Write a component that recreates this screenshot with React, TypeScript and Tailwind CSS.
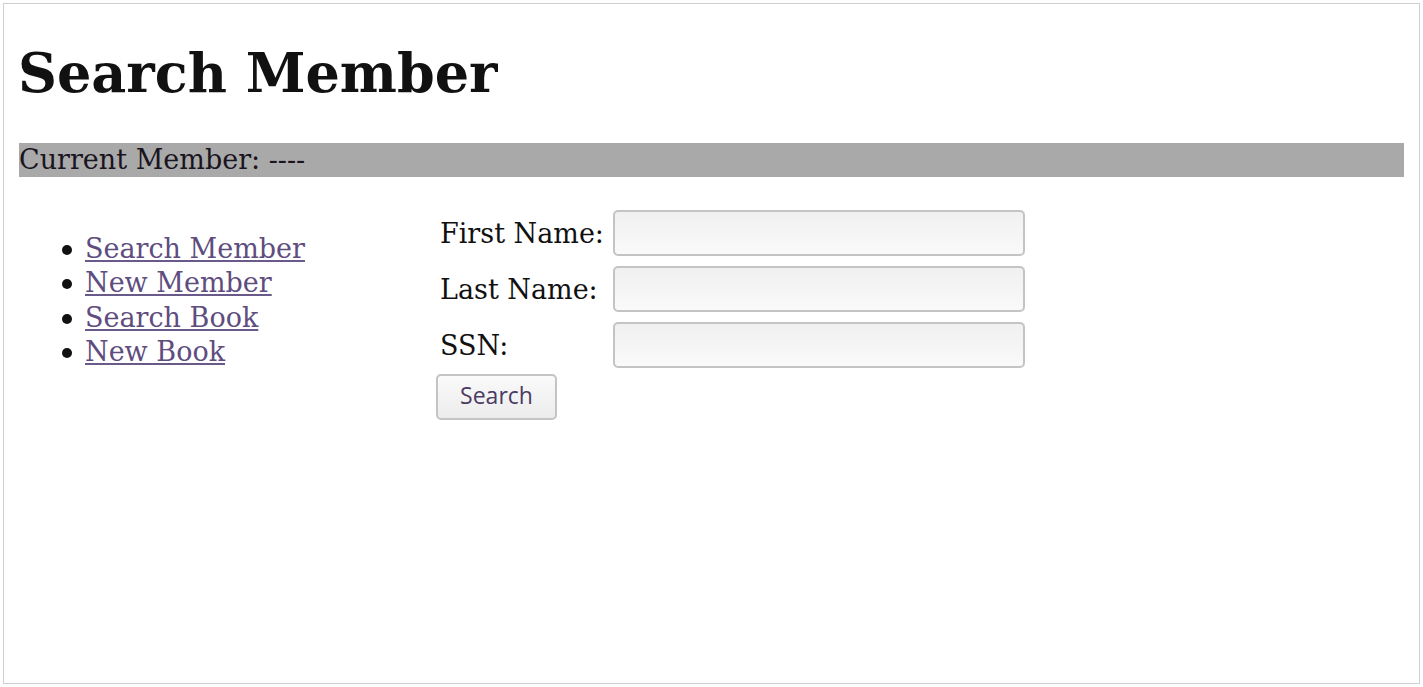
import React from "react";

const serif = { fontFamily: '"DejaVu Serif", serif' };

export default function App() {
  const links = ["Search Member", "New Member", "Search Book", "New Book"];
  return (
    <div className="w-[1423px] h-[687px] bg-white pt-[3px] pl-[3px]" style={serif}>
      <div className="w-[1417px] h-[681px] border border-[#cfcfcf] px-[14px] pt-[29px] text-black">
        <h1 className="text-[54px] leading-[80px] font-bold text-[#111]">Search Member</h1>
        <div className="mt-[30px] mx-[1px] h-[34px] bg-[#a9a9a9] text-[27px] leading-[34px] text-[#1a1420] whitespace-nowrap">
          Current Member: ----
        </div>
        <div className="flex mt-[33px]">
          <ul className="w-[418px] pt-[22px] pl-[44px]">
            {links.map((l) => (
              <li key={l} className="flex items-center h-[34.3px] text-[27px] leading-[34px] whitespace-nowrap">
                <span className="w-[10px] h-[10px] rounded-full bg-[#111] mr-[13px] mt-[2px]" />
                <a href="#" className="underline text-[#5e4d7e] decoration-[#6a5a8a]">{l}</a>
              </li>
            ))}
          </ul>
          <div className="flex flex-col">
            {["First Name:", "Last Name:", "SSN:"].map((lab) => (
              <div key={lab} className="flex items-center mb-[10px]">
                <label className="w-[177px] pl-[4px] pt-[2px] text-[27px] text-[#111] whitespace-nowrap">{lab}</label>
                <input
                  type="text"
                  className="w-[412px] h-[46px] rounded-[5px] border-2 border-[#c4c4c4] bg-gradient-to-b from-[#f0f0f0] to-[#fafafa]"
                />
              </div>
            ))}
            <button
              className="mt-[-4px] w-[121px] h-[46px] rounded-[5px] border-2 border-[#c4c4c4] bg-gradient-to-b from-[#fafafa] to-[#ececec] text-[23px] leading-[30px] pb-[4px] text-[#4b3b63]"
              style={{ fontFamily: '"Open Sans", sans-serif' }}
            >
              Search
            </button>
          </div>
        </div>
      </div>
    </div>
  );
}
